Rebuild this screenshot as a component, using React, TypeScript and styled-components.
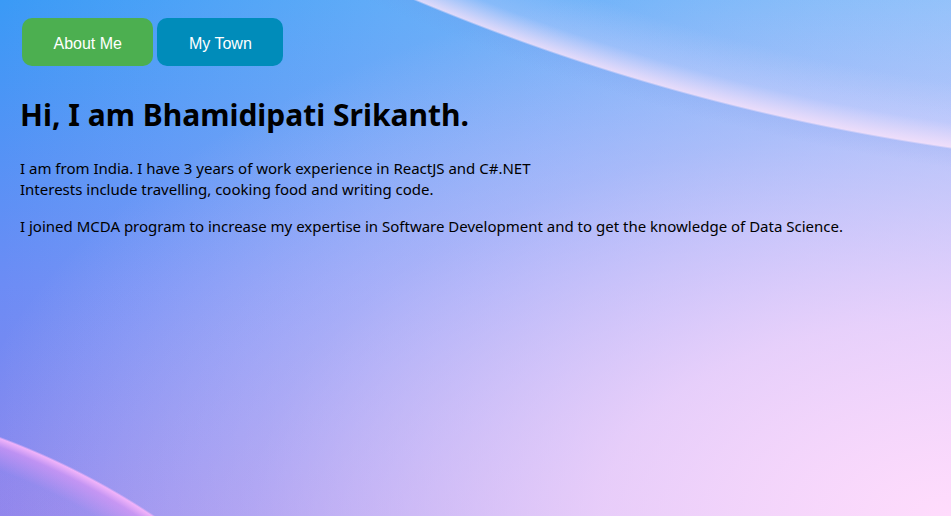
import React from "react";
import styled, { createGlobalStyle } from "styled-components";

const GlobalStyle = createGlobalStyle`
  html, body {
    margin: 0;
    padding: 0;
    height: 100%;
  }
  body {
    font-family: "Noto Sans", "Open Sans", sans-serif;
  }
  #root {
    min-height: 100%;
  }
`;

const Page = styled.div`
  min-height: 516px;
  box-sizing: border-box;
  padding: 18px 20px 8px 20px;
  color: #000;
  background:
    radial-gradient(circle 2185px at 1260px -2015px,
      rgba(255, 255, 255, 0) 2120px,
      rgba(240, 225, 255, 0.22) 2160px,
      rgba(252, 228, 250, 0.8) 2184px,
      rgba(110, 140, 225, 0.1) 2186px,
      rgba(110, 140, 225, 0) 2205px),
    radial-gradient(circle 736px at -255px 1128px,
      rgba(140, 120, 225, 0.25) 0px,
      rgba(160, 130, 235, 0.2) 705px,
      rgba(225, 150, 245, 0.6) 727px,
      rgba(245, 180, 250, 0.95) 735px,
      rgba(255, 255, 255, 0) 737px),
    radial-gradient(ellipse 1000px 560px at 100% 100%,
      rgba(255, 220, 252, 1) 0%,
      rgba(253, 218, 252, 0.75) 35%,
      rgba(240, 210, 252, 0.3) 70%,
      rgba(240, 210, 252, 0) 100%),
    linear-gradient(90deg,
      rgba(255, 255, 255, 0) 0%,
      rgba(235, 235, 255, 0.22) 40%,
      rgba(240, 240, 255, 0.45) 100%),
    linear-gradient(180deg, #3a9af6 0%, #6c8cf5 55%, #8a84ec 100%);
`;

const Nav = styled.nav`
  display: flex;
  gap: 4px;
  padding-left: 2px;
`;

const NavButton = styled.button<{ $variant: "green" | "blue" }>`
  border: none;
  border-radius: 10px;
  padding: 17px 31.5px 13px;
  height: 48px;
  font-family: "Liberation Sans", Arial, sans-serif;
  font-size: 16px;
  color: #fff;
  cursor: pointer;
  background: ${(p) => (p.$variant === "green" ? "#4caf50" : "#008cba")};
`;

const Title = styled.h1`
  margin: 28px 0 22px;
  font-size: 30px;
  line-height: 42px;
  font-weight: 700;
`;

const Para = styled.p`
  margin: 0 0 16px;
  font-size: 15px;
  line-height: 21px;
`;

export default function App() {
  return (
    <>
      <GlobalStyle />
      <Page>
        <Nav>
          <NavButton $variant="green">About Me</NavButton>
          <NavButton $variant="blue">My Town</NavButton>
        </Nav>
        <Title>Hi, I am Bhamidipati Srikanth.</Title>
        <Para>
          I am from India. I have 3 years of work experience in ReactJS and C#.NET
          <br />
          Interests include travelling, cooking food and writing code.
        </Para>
        <Para>
          I joined MCDA program to increase my expertise in Software Development and to get the knowledge of Data Science.
        </Para>
      </Page>
    </>
  );
}
